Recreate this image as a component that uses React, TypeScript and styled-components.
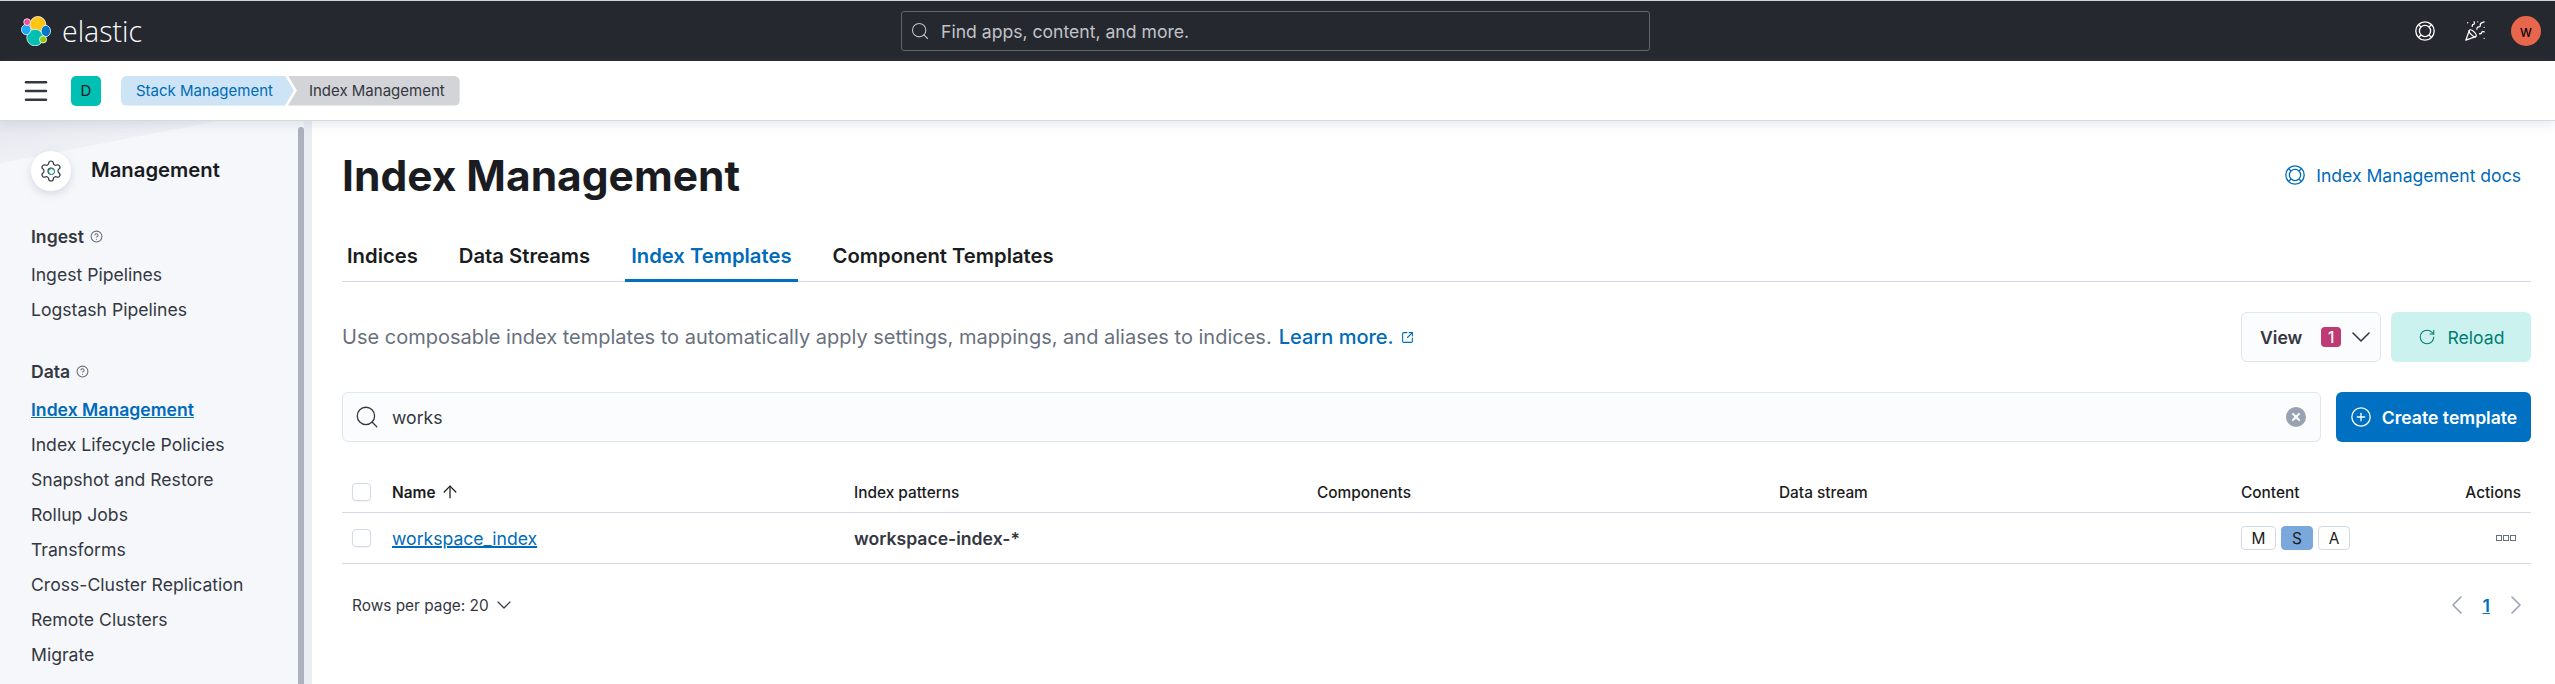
import * as React from "react";
import styled, { createGlobalStyle } from "styled-components";
import { ArrowUp, ChevronDown, ChevronLeft, ChevronRight, CirclePlus, Menu, PartyPopper, RotateCw, Search, Settings, SquareArrowOutUpRight, X, HelpCircle } from "lucide-react";

const Global = createGlobalStyle`
  html, body { margin: 0; padding: 0; background: #fff; }
  body { font-family: Inter, "Liberation Sans", sans-serif; color: #1a1c21; overflow: hidden; }
  * { box-sizing: border-box; }
`;

const Page = styled.div`
  width: 2555px;
  height: 684px;
  display: flex;
  flex-direction: column;
  overflow: hidden;
  border-top: 1px solid #d3d5d8;
`;

const TopBar = styled.header`
  height: 60px;
  flex: none;
  background: #25282f;
  display: grid;
  grid-template-columns: 880px 749px 1fr;
  align-items: center;
  padding: 0 14px 0 21px;
`;

const Brand = styled.div`
  display: flex;
  align-items: center;
  gap: 11px;
`;

const BrandName = styled.span`
  font-family: "Open Sans", sans-serif;
  font-size: 28.5px;
  color: #fff;
  font-weight: 300;
`;

const GlobalSearch = styled.div`
  height: 40px;
  border: 1px solid #62656c;
  border-radius: 3px;
  background: #25282f;
  display: flex;
  align-items: center;
  gap: 11px;
  padding: 0 8px;
  color: #c0c3c8;
  font-size: 17.6px;
`;

const TopIcons = styled.div`
  display: flex;
  justify-content: flex-end;
  align-items: center;
  color: #fff;
`;

const Avatar = styled.div`
  width: 30px;
  height: 30px;
  margin-left: 25px;
  border-radius: 50%;
  background: #e7664c;
  color: #000;
  display: flex;
  align-items: center;
  justify-content: center;
  font-size: 15px;
`;

const PopperWrap = styled.span`
  display: flex;
  margin-left: 29px;
`;

const SubBar = styled.div`
  height: 60px;
  flex: none;
  display: flex;
  align-items: center;
  padding: 0 0 0 21px;
  background: #fff;
  border-bottom: 1px solid #d3dae6;
  box-shadow: 0 4px 10px rgba(152, 162, 179, 0.22);
  position: relative;
  z-index: 2;
`;

const SpaceBadge = styled.div`
  width: 30px;
  height: 30px;
  margin: 0 20px;
  border-radius: 5px;
  background: #00bfb3;
  display: flex;
  align-items: center;
  justify-content: center;
  font-size: 15px;
`;

const Crumb = styled.div<{ $current?: boolean }>`
  height: 30px;
  display: flex;
  align-items: center;
  font-size: 15px;
  padding: ${(p) => (p.$current ? "0 15px 0 21px" : "0 21px 0 15px")};
  background: ${(p) => (p.$current ? "#d3d4d7" : "#cce4f5")};
  color: ${(p) => (p.$current ? "#343741" : "#006bb8")};
  border-radius: ${(p) => (p.$current ? "0 6px 6px 0" : "6px 0 0 6px")};
  clip-path: ${(p) =>
    p.$current
      ? "polygon(0 0, 100% 0, 100% 100%, 0 100%, 9px 50%)"
      : "polygon(0 0, calc(100% - 9px) 0, 100% 50%, calc(100% - 9px) 100%, 0 100%)"};
  margin-left: ${(p) => (p.$current ? "-6px" : "0")};
`;

const Body = styled.div`
  flex: 1;
  display: flex;
  min-height: 0;
`;

const Sidebar = styled.aside`
  width: 312px;
  flex: none;
  background: linear-gradient(169deg, #e4e7ee 0, #eef0f5 41px, #f5f7fb 42px);
  border-right: 8px solid #ebedf2;
  padding: 30px 0 0 31px;
  position: relative;
`;

const ScrollThumb = styled.div`
  position: absolute;
  top: 6px;
  bottom: 0;
  right: 0;
  width: 6px;
  background: #abb2bb;
  border-radius: 3px 3px 0 0;
`;

const SideHead = styled.div`
  display: flex;
  align-items: center;
  gap: 20px;
  height: 40px;
  padding-bottom: 4px;
  font-size: 20.3px;
  font-weight: 600;
  margin-bottom: 33px;
`;

const GearDisc = styled.div`
  width: 40px;
  height: 40px;
  margin-bottom: -4px;
  border-radius: 50%;
  background: #fff;
  box-shadow: 0 3px 8px rgba(152, 162, 179, 0.35);
  display: flex;
  align-items: center;
  justify-content: center;
  color: #343741;
  position: relative;
`;

const GearCore = styled.span`
  position: absolute;
  left: 16.5px;
  top: 16.5px;
  width: 7px;
  height: 7px;
  border-radius: 50%;
  background: #fff;
  border: 1.5px solid #017d73;
`;

const SideGroup = styled.div`
  margin-bottom: 32px;
`;

const SideTitle = styled.div`
  display: flex;
  align-items: center;
  gap: 6px;
  font-size: 17.6px;
  font-weight: 600;
  color: #343741;
  height: 24px;
  margin-bottom: 9px;
`;

const SideLink = styled.div<{ $active?: boolean }>`
  height: 35px;
  display: flex;
  align-items: center;
  font-size: 17.6px;
  font-weight: ${(p) => (p.$active ? 600 : 400)};
  color: ${(p) => (p.$active ? "#006bb8" : "#343741")};
  text-decoration: ${(p) => (p.$active ? "underline" : "none")};
`;

const Main = styled.main`
  flex: 1;
  min-width: 0;
  padding: 29px 24px 0 30px;
`;

const TitleRow = styled.div`
  display: flex;
  justify-content: space-between;
  align-items: center;
  height: 50px;
  margin-bottom: 40px;
`;

const Title = styled.h1`
  margin: 0;
  font-size: 42.5px;
  font-weight: 700;
  color: #1a1c21;
`;

const DocsLink = styled.a`
  display: flex;
  align-items: center;
  gap: 11px;
  font-size: 17.6px;
  color: #006bb8;
  margin-right: 10px;
`;

const Tabs = styled.div`
  display: flex;
  gap: 41px;
  height: 42px;
  padding: 0 5px;
  border-bottom: 1px solid #d3dae6;
`;

const Tab = styled.div<{ $active?: boolean }>`
  font-size: 20.25px;
  font-weight: 600;
  line-height: 26px;
  padding: 3px 0 0;
  position: relative;
  color: ${(p) => (p.$active ? "#006bb8" : "#1a1c21")};
  &::after {
    content: "";
    display: ${(p) => (p.$active ? "block" : "none")};
    position: absolute;
    left: -6px;
    right: -6px;
    bottom: -1px;
    height: 3px;
    background: #0071c2;
  }
`;

const IntroRow = styled.div`
  display: flex;
  justify-content: space-between;
  align-items: center;
  margin-top: 30px;
  height: 50px;
`;

const Intro = styled.p`
  margin: 0;
  font-size: 20px;
  color: #69707d;
  display: flex;
  align-items: center;
`;

const Learn = styled.a`
  color: #006bb8;
  font-weight: 500;
  margin-left: 7px;
  display: inline-flex;
  align-items: center;
  gap: 7px;
`;

const Actions = styled.div`
  display: flex;
  gap: 10px;
`;

const ViewButton = styled.div`
  width: 140px;
  height: 50px;
  border: 1px solid #e0e5ee;
  border-radius: 6px;
  background: #fbfcfd;
  display: flex;
  align-items: center;
  padding: 0 0 0 18px;
  font-size: 17.6px;
  font-weight: 600;
  color: #343741;
`;

const CountBadge = styled.span`
  width: 20px;
  height: 20px;
  border-radius: 4px;
  background: #bd3a73;
  color: #fff;
  font-size: 15.4px;
  font-weight: 500;
  margin: 0 4px 0 19px;
  display: flex;
  align-items: center;
  justify-content: center;
`;

const ReloadButton = styled.div`
  width: 140px;
  height: 50px;
  border-radius: 6px;
  background: #ccf2ef;
  color: #017d73;
  display: flex;
  align-items: center;
  justify-content: center;
  gap: 12px;
  font-size: 17.6px;
`;

const SearchRow = styled.div`
  display: flex;
  gap: 15px;
  margin-top: 30px;
  height: 50px;
`;

const SearchBox = styled.div`
  flex: 1;
  border: 1px solid #e0e5ee;
  border-radius: 6px;
  background: #fbfcfd;
  display: flex;
  align-items: center;
  gap: 12px;
  padding: 0 14px 0 11px;
  font-size: 17.6px;
  color: #343741;
`;

const ClearIcon = styled.span`
  margin-left: auto;
  width: 20px;
  height: 20px;
  border-radius: 50%;
  background: #98a2b3;
  color: #fff;
  display: flex;
  align-items: center;
  justify-content: center;
`;

const CreateButton = styled.div`
  width: 195px;
  border-radius: 6px;
  background: #0071c2;
  color: #fff;
  display: flex;
  align-items: center;
  justify-content: center;
  gap: 10px;
  font-size: 17.6px;
  font-weight: 600;
`;

const Table = styled.div`
  margin-top: 22px;
  font-size: 15.4px;
`;

const Row = styled.div<{ $head?: boolean }>`
  display: grid;
  grid-template-columns: 40px 462px 463px 462px 462px 1fr 60px;
  align-items: center;
  height: ${(p) => (p.$head ? "49px" : "51px")};
  padding: ${(p) => (p.$head ? "8px 10px 0" : "0 10px")};
  border-bottom: 1px solid #d3dae6;
  font-weight: ${(p) => (p.$head ? 500 : 400)};
`;

const Check = styled.span`
  width: 19px;
  height: 18px;
  border: 1px solid #d3dae6;
  border-radius: 4px;
  background: #fff;
  box-shadow: 0 1px 2px rgba(0, 0, 0, 0.06);
`;

const NameCell = styled.div`
  display: flex;
  align-items: center;
  gap: 5px;
  font-weight: 600;
`;

const NameLink = styled.a`
  font-size: 17.6px;
  color: #006bb8;
  text-decoration: underline;
  text-decoration-thickness: 2px;
`;

const PatternCell = styled.div`
  font-size: 17.6px;
  font-weight: 600;
  color: #343741;
`;

const Flags = styled.div`
  display: flex;
  gap: 5px;
`;

const Flag = styled.span<{ $on?: boolean; $w: number }>`
  width: ${(p) => p.$w}px;
  height: 24px;
  border-radius: 4px;
  border: 1px solid ${(p) => (p.$on ? "#7aa8db" : "#d3dae6")};
  background: ${(p) => (p.$on ? "#7aa8db" : "#fff")};
  display: flex;
  align-items: center;
  justify-content: center;
  font-size: 15.4px;
  color: #1a1c21;
`;

const RightCell = styled.div`
  justify-self: end;
`;

const Dots = styled.div`
  display: flex;
  gap: 1px;
  justify-content: flex-end;
  margin-right: 5px;
`;

const Dot = styled.span`
  width: 6px;
  height: 6px;
  border: 1px solid #69707d;
`;

const Footer = styled.div`
  display: flex;
  justify-content: space-between;
  align-items: center;
  height: 50px;
  margin-top: 16px;
  padding: 0 0 0 10px;
`;

const RowsPerPage = styled.div`
  display: flex;
  align-items: center;
  gap: 3px;
  font-size: 15.4px;
  color: #343741;
`;

const Pager = styled.div`
  display: flex;
  align-items: center;
  gap: 10px;
  color: #98a2b3;
  margin-right: -1px;
`;

const PageNum = styled.span`
  font-size: 17.6px;
  font-weight: 600;
  color: #0071c2;
  text-decoration: underline;
`;

const ElasticLogo = () => (
  <svg width="30" height="30" viewBox="0 0 32 32">
    <circle cx="18" cy="9" r="8.5" fill="#fec514" stroke="#fff" strokeWidth="0.8" />
    <circle cx="15" cy="23" r="8.8" fill="#00bfb3" stroke="#fff" strokeWidth="0.8" />
    <ellipse cx="5.5" cy="14.5" rx="5" ry="5.5" fill="#1ba9f5" stroke="#fff" strokeWidth="0.8" />
    <ellipse cx="26.5" cy="16" rx="5" ry="6" fill="#0077cc" stroke="#fff" strokeWidth="0.8" />
    <circle cx="6.5" cy="6.5" r="3.6" fill="#f04e98" stroke="#fff" strokeWidth="0.8" />
    <circle cx="23.5" cy="25" r="3.8" fill="#93c90e" stroke="#fff" strokeWidth="0.8" />
  </svg>
);

const HelpRing = () => (
  <svg width="20" height="20" viewBox="0 0 20 20" fill="none" stroke="currentColor" strokeWidth="1.3">
    <circle cx="10" cy="10" r="9.2" />
    <circle cx="10" cy="10" r="5.6" />
    <path d="M3.5 3.5 6 6M16.5 3.5 14 6M3.5 16.5 6 14M16.5 16.5 14 14" />
  </svg>
);

const ingest = ["Ingest Pipelines", "Logstash Pipelines"];
const data = [
  "Index Management",
  "Index Lifecycle Policies",
  "Snapshot and Restore",
  "Rollup Jobs",
  "Transforms",
  "Cross-Cluster Replication",
  "Remote Clusters",
  "Migrate",
];

export default function App() {
  return (
    <Page>
      <Global />
      <TopBar>
        <Brand>
          <ElasticLogo />
          <BrandName>elastic</BrandName>
        </Brand>
        <GlobalSearch>
          <Search size={20} strokeWidth={1.3} />
          Find apps, content, and more.
        </GlobalSearch>
        <TopIcons>
          <HelpRing />
          <PopperWrap><PartyPopper size={22} strokeWidth={1.4} /></PopperWrap>
          <Avatar>w</Avatar>
        </TopIcons>
      </TopBar>
      <SubBar>
        <Menu size={30} color="#343741" />
        <SpaceBadge>D</SpaceBadge>
        <Crumb>Stack Management</Crumb>
        <Crumb $current>Index Management</Crumb>
      </SubBar>
      <Body>
        <Sidebar>
          <ScrollThumb />
          <SideHead>
            <GearDisc>
              <Settings size={24} strokeWidth={1.2} />
              <GearCore />
            </GearDisc>
            Management
          </SideHead>
          <SideGroup>
            <SideTitle>Ingest <HelpCircle size={13} color="#69707d" /></SideTitle>
            {ingest.map((l) => <SideLink key={l}>{l}</SideLink>)}
          </SideGroup>
          <SideGroup>
            <SideTitle>Data <HelpCircle size={13} color="#69707d" /></SideTitle>
            {data.map((l, i) => <SideLink key={l} $active={i === 0}>{l}</SideLink>)}
          </SideGroup>
        </Sidebar>
        <Main>
          <TitleRow>
            <Title>Index Management</Title>
            <DocsLink><HelpRing />Index Management docs</DocsLink>
          </TitleRow>
          <Tabs>
            <Tab>Indices</Tab>
            <Tab>Data Streams</Tab>
            <Tab $active>Index Templates</Tab>
            <Tab>Component Templates</Tab>
          </Tabs>
          <IntroRow>
            <Intro>
              Use composable index templates to automatically apply settings, mappings, and aliases to indices.
              <Learn>Learn more. <SquareArrowOutUpRight size={13} /></Learn>
            </Intro>
            <Actions>
              <ViewButton>View<CountBadge>1</CountBadge><ChevronDown size={32} strokeWidth={1.2} /></ViewButton>
              <ReloadButton><RotateCw size={18} strokeWidth={1.4} />Reload</ReloadButton>
            </Actions>
          </IntroRow>
          <SearchRow>
            <SearchBox>
              <Search size={26} strokeWidth={1.2} />
              works
              <ClearIcon><X size={12} strokeWidth={4} /></ClearIcon>
            </SearchBox>
            <CreateButton>
              <CirclePlus size={22} strokeWidth={1.4} />
              Create template
            </CreateButton>
          </SearchRow>
          <Table>
            <Row $head>
              <Check />
              <NameCell>Name <ArrowUp size={20} strokeWidth={1.5} /></NameCell>
              <div>Index patterns</div>
              <div>Components</div>
              <div>Data stream</div>
              <div>Content</div>
              <RightCell>Actions</RightCell>
            </Row>
            <Row>
              <Check />
              <div><NameLink>workspace_index</NameLink></div>
              <PatternCell>workspace-index-*</PatternCell>
              <div />
              <div />
              <Flags>
                <Flag $w={35}>M</Flag>
                <Flag $w={32} $on>S</Flag>
                <Flag $w={32}>A</Flag>
              </Flags>
              <Dots><Dot /><Dot /><Dot /></Dots>
            </Row>
          </Table>
          <Footer>
            <RowsPerPage>Rows per page: 20 <ChevronDown size={24} strokeWidth={1.2} /></RowsPerPage>
            <Pager>
              <ChevronLeft size={32} strokeWidth={1.2} />
              <PageNum>1</PageNum>
              <ChevronRight size={32} strokeWidth={1.2} />
            </Pager>
          </Footer>
        </Main>
      </Body>
    </Page>
  );
}
